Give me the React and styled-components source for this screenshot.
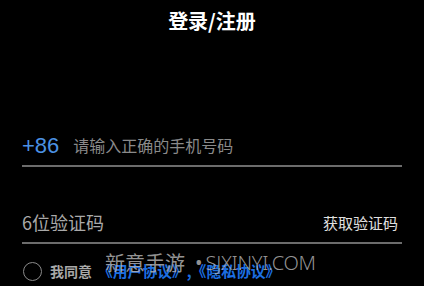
import React, { useState } from 'react'
import styled, { createGlobalStyle } from 'styled-components'

const Global = createGlobalStyle`
  html, body {
    margin: 0;
    padding: 0;
    background: #000;
  }
  body {
    font-family: "Noto Sans CJK SC", "Noto Sans", sans-serif;
  }
`

const Page = styled.div`
  position: relative;
  width: 424px;
  height: 286px;
  background: #000;
  overflow: hidden;
  display: flex;
  flex-direction: column;
`

const Title = styled.h1`
  margin: 0;
  padding-top: 9px;
  text-align: center;
  color: #fff;
  font-size: 20px;
  line-height: 24px;
  font-weight: 700;
`

const Form = styled.div`
  display: flex;
  flex-direction: column;
  padding: 0 22px;
`

const Field = styled.div`
  display: flex;
  align-items: center;
  height: ${p => p.h}px;
  margin-top: ${p => p.top}px;
  border-bottom: 2px solid #6c6c6c;
  box-sizing: border-box;
`

const Code = styled.span`
  color: #4b91e3;
  font-family: "Liberation Sans", Arial, sans-serif;
  font-size: 22px;
  margin-right: 14px;
  margin-top: 2px;
`

const Placeholder = styled.span`
  color: ${p => p.color};
  font-size: ${p => p.size}px;
  flex: 1;
`

const GetCode = styled.button`
  background: none;
  border: none;
  padding: 0 4px 0 0;
  color: #e0e0e0;
  font-family: inherit;
  font-size: 15px;
  cursor: pointer;
`

const Agree = styled.label`
  display: flex;
  align-items: center;
  margin-top: 17px;
  font-size: 14px;
  line-height: 20px;
  font-weight: 700;
  color: #a8a8a8;
`

const Radio = styled.span`
  width: 17px;
  height: 17px;
  border-radius: 50%;
  border: 1.5px solid #8a8a8a;
  margin: 0 8px 0 1px;
  background: ${p => (p.checked ? '#4b91e3' : 'transparent')};
`

const Link = styled.span`
  color: #1c6fe3;
  font-size: 14.8px;
  margin-left: 6px;
`

const Watermark = styled.div`
  position: absolute;
  left: 105px;
  top: 250px;
  display: flex;
  align-items: center;
  font-size: 20px;
  line-height: 26px;
  color: rgba(175, 175, 175, 0.85);
  white-space: nowrap;
  pointer-events: none;
`

const Dot = styled.span`
  font-family: "Noto Sans", sans-serif;
  margin: 0 3px 0 10px;
`

const Latin = styled.span`
  font-family: "Noto Sans", sans-serif;
  font-weight: 300;
  letter-spacing: -0.3px;
`

export default function App() {
  const [agreed, setAgreed] = useState(false)

  return (
    <Page>
      <Global />
      <Title>登录/注册</Title>
      <Form>
        <Field h={42} top={92}>
          <Code>+86</Code>
          <Placeholder color="#8a8a8a" size={16}>请输入正确的手机号码</Placeholder>
        </Field>
        <Field h={42} top={35}>
          <Placeholder color="#a9a9a9" size={18}>6位验证码</Placeholder>
          <GetCode>获取验证码</GetCode>
        </Field>
        <Agree onClick={() => setAgreed(!agreed)}>
          <Radio checked={agreed} />
          我同意
          <Link>《用户协议》,《隐私协议》</Link>
        </Agree>
      </Form>
      <Watermark>
        新意手游<Dot>•</Dot><Latin>SJXINYI.COM</Latin>
      </Watermark>
    </Page>
  )
}
